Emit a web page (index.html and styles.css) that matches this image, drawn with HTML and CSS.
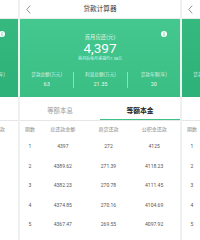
FILE: index.html
```html
<!DOCTYPE html>
<html lang="zh">
<head>
<meta charset="utf-8">
<title>贷款计算器</title>
<link rel="stylesheet" href="styles.css">
</head>
<body>
<div class="track">
  <section class="page side">
    <header class="bar">
      <svg class="back" viewBox="0 0 5 9"><polyline points="4.2,0.6 0.8,4.5 4.2,8.4"/></svg>
      <h1 class="title">贷款计算器</h1>
    </header>
    <div class="card">
      <div class="head"><span class="lbl">每月应还(元)</span><svg class="info" viewBox="0 0 6 6"><circle cx="3" cy="3" r="3"/><rect x="2.6" y="1.1" width="0.8" height="0.8"/><rect x="2.6" y="2.4" width="0.8" height="2.4"/></svg></div>
      <div class="big">3,377</div>
      <div class="sub">每月还款金额不变</div>
      <div class="stats">
        <div class="stat"><span class="slbl">贷款总额(万元)</span><span class="sval">63</span></div>
        <div class="stat"><span class="slbl">利息总额(万元)</span><span class="sval">18.05</span></div>
        <div class="stat"><span class="slbl">贷款年限(年)</span><span class="sval">20</span></div>
      </div>
    </div>
    <nav class="tabs"><span class="tab on">等额本息</span><span class="tab">等额本金</span></nav>
    <div class="table">
      <div class="row th"><span>期数</span><span>总还款金额</span><span>商贷还款</span><span>公积金还款</span></div>
      <div class="row"><span>1</span><span>3377</span><span>210</span><span>3167</span></div>
      <div class="row"><span>2</span><span>3377</span><span>210</span><span>3167</span></div>
      <div class="row"><span>3</span><span>3377</span><span>210</span><span>3167</span></div>
      <div class="row"><span>4</span><span>3377</span><span>210</span><span>3167</span></div>
      <div class="row"><span>5</span><span>3377</span><span>210</span><span>3167</span></div>
    </div>
  </section>

  <section class="page main">
    <header class="bar">
      <svg class="back" viewBox="0 0 5 9"><polyline points="4.2,0.6 0.8,4.5 4.2,8.4"/></svg>
      <h1 class="title">贷款计算器</h1>
    </header>
    <div class="card">
      <div class="head"><span class="lbl">首月应还(元)</span><svg class="info" viewBox="0 0 6 6"><circle cx="3" cy="3" r="3"/><rect x="2.6" y="1.1" width="0.8" height="0.8"/><rect x="2.6" y="2.4" width="0.8" height="2.4"/></svg></div>
      <div class="big">4,397</div>
      <div class="sub">首月后每月递减约7.38元</div>
      <div class="stats">
        <div class="stat"><span class="slbl">贷款总额(万元)</span><span class="sval">63</span></div>
        <div class="stat"><span class="slbl">利息总额(万元)</span><span class="sval">21.35</span></div>
        <div class="stat"><span class="slbl">贷款年限(年)</span><span class="sval">20</span></div>
      </div>
    </div>
    <nav class="tabs"><span class="tab">等额本息</span><span class="tab on">等额本金</span></nav>
    <div class="table">
      <div class="row th"><span>期数</span><span>总还款金额</span><span>商贷还款</span><span>公积金还款</span></div>
      <div class="row"><span>1</span><span>4397</span><span>272</span><span>4125</span></div>
      <div class="row"><span>2</span><span>4389.62</span><span>271.39</span><span>4118.23</span></div>
      <div class="row"><span>3</span><span>4382.23</span><span>270.78</span><span>4111.45</span></div>
      <div class="row"><span>4</span><span>4374.85</span><span>270.16</span><span>4104.69</span></div>
      <div class="row"><span>5</span><span>4367.47</span><span>269.55</span><span>4097.92</span></div>
    </div>
  </section>

  <section class="page side">
    <header class="bar">
      <svg class="back" viewBox="0 0 5 9"><polyline points="4.2,0.6 0.8,4.5 4.2,8.4"/></svg>
      <h1 class="title">贷款计算器</h1>
    </header>
    <div class="card">
      <div class="head"><span class="lbl">首月应还(元)</span><svg class="info" viewBox="0 0 6 6"><circle cx="3" cy="3" r="3"/><rect x="2.6" y="1.1" width="0.8" height="0.8"/><rect x="2.6" y="2.4" width="0.8" height="2.4"/></svg></div>
      <div class="big">4,397</div>
      <div class="sub">首月后每月递减约7.38元</div>
      <div class="stats">
        <div class="stat"><span class="slbl">贷款总额(万元)</span><span class="sval">63</span></div>
        <div class="stat"><span class="slbl">利息总额(万元)</span><span class="sval">21.35</span></div>
        <div class="stat"><span class="slbl">贷款年限(年)</span><span class="sval">20</span></div>
      </div>
    </div>
    <nav class="tabs"><span class="tab">等额本息</span><span class="tab on">等额本金</span></nav>
    <div class="table">
      <div class="row th"><span>期数</span><span>总还款金额</span><span>商贷还款</span><span>公积金还款</span></div>
      <div class="row"><span>1</span><span>4397</span><span>272</span><span>4125</span></div>
      <div class="row"><span>2</span><span>4389.62</span><span>271.39</span><span>4118.23</span></div>
      <div class="row"><span>3</span><span>4382.23</span><span>270.78</span><span>4111.45</span></div>
      <div class="row"><span>4</span><span>4374.85</span><span>270.16</span><span>4104.69</span></div>
      <div class="row"><span>5</span><span>4367.47</span><span>269.55</span><span>4097.92</span></div>
    </div>
  </section>
</div>
</body>
</html>
```

FILE: styles.css
```css
html, body {
  margin: 0;
  padding: 0;
  width: 200px;
  height: 240px;
  overflow: hidden;
  background: #ffffff;
  font-family: Roboto, "Noto Sans CJK SC", sans-serif;
}

.track {
  display: flex;
  gap: 2px;
  margin-left: -142px;
  width: 484px;
  height: 240px;
  background: #eef1ef;
}

.page {
  flex: 0 0 160px;
  width: 160px;
  background: #ffffff;
  display: flex;
  flex-direction: column;
}

.bar {
  height: 19px;
  display: grid;
  grid-template-columns: 20px 1fr 20px;
  align-items: center;
  background: #ffffff;
  border-bottom: 0.5px solid #ececec;
  box-sizing: border-box;
}

.back {
  width: 5px;
  height: 9px;
  margin-left: 6px;
  fill: none;
  stroke: #666;
  stroke-width: 0.7;
}

.title {
  margin: 0;
  grid-column: 2;
  text-align: center;
  font-size: 6.6px;
  line-height: 9px;
  font-weight: 400;
  color: #333;
}

.card {
  height: 78px;
  box-sizing: border-box;
  padding-top: 11px;
  color: #fff;
  text-align: center;
  background: linear-gradient(180deg, #45c88f 0%, #39be84 100%);
}

.side .card {
  background: linear-gradient(180deg, #36b97f 0%, #2eb178 100%);
}

.head {
  position: relative;
  height: 8px;
  line-height: 8px;
}

.lbl {
  font-size: 5.4px;
  color: rgba(255,255,255,0.85);
}

.info {
  position: absolute;
  right: 13px;
  top: 1px;
  width: 6px;
  height: 6px;
  fill: #ffffff;
}

.info rect {
  fill: #3cc187;
}

.big {
  margin-top: 2.5px;
  font-size: 13.6px;
  line-height: 14px;
  font-weight: 400;
}

.sub {
  margin-top: 1px;
  font-size: 4px;
  line-height: 5px;
  color: rgba(255,255,255,0.85);
}

.stats {
  margin-top: 11.5px;
  display: grid;
  grid-template-columns: repeat(3, 1fr);
}

.stat {
  height: 16px;
  display: flex;
  flex-direction: column;
  align-items: center;
}

.stat + .stat {
  border-left: 0.5px solid rgba(255,255,255,0.45);
}

.slbl {
  font-size: 4.6px;
  line-height: 5px;
  color: rgba(255,255,255,0.8);
}

.sval {
  margin-top: 2.5px;
  font-size: 5.6px;
  line-height: 8px;
  color: rgba(255,255,255,0.9);
}

.tabs {
  display: grid;
  grid-template-columns: 1fr 1fr;
  border-bottom: 0.5px solid #e6e6e6;
}

.tab {
  padding-top: 10px;
  padding-bottom: 3.5px;
  line-height: 8px;
  text-align: center;
  font-size: 6.4px;
  color: #999;
  border-bottom: 1.5px solid transparent;
}

.tab.on {
  color: #222;
  font-weight: 700;
  font-size: 6.8px;
  border-bottom-color: #3cc187;
}

.table {
  display: flex;
  flex-direction: column;
}

.row {
  display: grid;
  grid-template-columns: 20px repeat(3, 1fr);
  padding-right: 3px;
  height: 19.5px;
  align-items: center;
  text-align: center;
  font-size: 5px;
  color: #555;
}

.row.th {
  height: 16px;
  color: #888;
}
```
